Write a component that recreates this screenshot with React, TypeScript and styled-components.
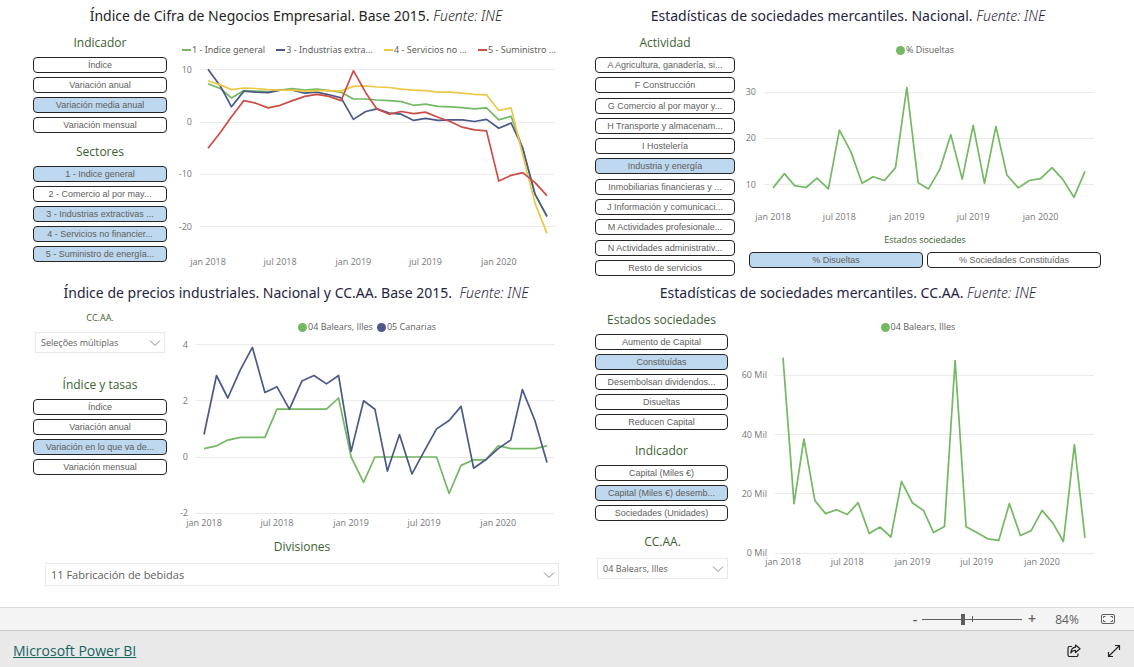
import React, { useId, useState } from "react";
import styled, { createGlobalStyle } from "styled-components";

const GlobalStyle = createGlobalStyle`
  *, *::before, *::after { box-sizing: border-box; }
  body {
    margin: 0;
    background: #fff;
    color: #605e5c;
    font-family: "Open Sans", "Noto Sans", sans-serif;
  }
  button, select, input { font: inherit; color: inherit; margin: 0; }
`;

const GREEN = "#74b862";
const BLUE = "#4a588a";
const YELLOW = "#ecc846";
const RED = "#cd4c46";

/* ---------- layout ---------- */

const Page = styled.div`
  min-height: 100vh;
  display: flex;
  flex-direction: column;
`;

const Report = styled.main`
  flex: 1;
  display: grid;
  grid-template-columns: 1fr 1fr;
  grid-template-rows: minmax(277px, auto) auto;
  align-content: start;
`;

const Panel = styled.section<{ $side: "left" | "right" }>`
  min-width: 0;
  padding: ${(p) => (p.$side === "left" ? "0 8px 0 33px" : "0 33px 0 28px")};
`;

const Title = styled.h2<{ $tone?: string }>`
  margin: 0;
  font-family: "Noto Sans", "Open Sans", sans-serif;
  font-size: 14px;
  line-height: 32px;
  font-weight: 400;
  text-align: center;
  white-space: nowrap;
  color: ${(p) => p.$tone || "#1f2440"};
  em { font-weight: 300; }
`;

const Columns = styled.div<{ $gap: number }>`
  display: flex;
  align-items: flex-start;
  gap: ${(p) => p.$gap}px;
`;

const Sidebar = styled.div<{ $width: number; $gap: number }>`
  flex: 0 0 ${(p) => p.$width}px;
  display: flex;
  flex-direction: column;
  gap: ${(p) => p.$gap}px;
`;

const ChartArea = styled.div`
  flex: 1;
  min-width: 0;
`;

/* ---------- slicers ---------- */

const Group = styled.div<{ $inset?: string }>`
  min-width: 0;
  padding: ${(p) => p.$inset || 0};
`;

const Heading = styled.h3<{ $small?: boolean }>`
  margin: 0 0 3px;
  font-size: ${(p) => (p.$small ? 9 : 12)}px;
  line-height: ${(p) => (p.$small ? 19 : 22)}px;
  font-weight: 400;
  text-align: center;
  color: #3b6132;
`;

const List = styled.div<{ $tall?: boolean }>`
  display: flex;
  flex-direction: column;
  justify-content: space-between;
  gap: 4px;
  min-height: ${(p) => (p.$tall ? "219px" : "0")};
`;

const Pair = styled.div`
  display: grid;
  grid-template-columns: 1fr 1fr;
  gap: 4px;
`;

const Tile = styled.button<{ $on: boolean }>`
  height: 16px;
  padding: 0 4px;
  border: 1px solid #252423;
  border-radius: 4px;
  background: ${(p) => (p.$on ? "#bdd7ee" : "#fff")};
  color: #605e5c;
  font-family: "Liberation Sans", Arial, sans-serif;
  font-size: 9px;
  line-height: 14px;
  text-align: center;
  white-space: nowrap;
  overflow: hidden;
  cursor: pointer;
`;

function Tiles({ items, initial, as: Wrap = List, tall }: { items: string[]; initial: string[]; as?: any; tall?: boolean }) {
  const [on, setOn] = useState(initial);
  const toggle = (t: string) => setOn(on.includes(t) ? on.filter((x) => x !== t) : [...on, t]);
  return (
    <Wrap $tall={tall}>
      {items.map((t) => (
        <Tile key={t} type="button" $on={on.includes(t)} aria-pressed={on.includes(t)} onClick={() => toggle(t)}>
          {t}
        </Tile>
      ))}
    </Wrap>
  );
}

function Slicer({ title, small, ...rest }: { title: string; small?: boolean; items: string[]; initial: string[]; as?: any; tall?: boolean }) {
  return (
    <Group role="group" aria-label={title}>
      <Heading $small={small}>{title}</Heading>
      <Tiles {...rest} />
    </Group>
  );
}

const SelectLabel = styled.label<{ $small?: boolean }>`
  display: block;
  margin-bottom: 5px;
  font-size: ${(p) => (p.$small ? 9 : 12)}px;
  line-height: ${(p) => (p.$small ? 18 : 22)}px;
  text-align: center;
  color: #3b6132;
`;

const SelectBox = styled.div`
  position: relative;
  svg {
    position: absolute;
    right: 4px;
    top: 50%;
    margin-top: -4px;
    pointer-events: none;
  }
`;

const NativeSelect = styled.select<{ $large?: boolean }>`
  display: block;
  width: 100%;
  height: ${(p) => (p.$large ? 23 : 21)}px;
  padding: 0 20px 0 5px;
  border: 1px solid #e9e9e9;
  border-radius: 0;
  background: #fff;
  appearance: none;
  font-size: ${(p) => (p.$large ? 11 : 9)}px;
  color: #605e5c;
`;

function Dropdown({ label, value, small, large, inset }: { label: string; value: string; small?: boolean; large?: boolean; inset: string }) {
  const id = useId();
  return (
    <Group $inset={inset}>
      <SelectLabel htmlFor={id} $small={small}>{label}</SelectLabel>
      <SelectBox>
        <NativeSelect id={id} $large={large}>
          <option>{value}</option>
        </NativeSelect>
        <svg width="12" height="8" viewBox="0 0 12 8" fill="none" stroke="#8a8886" aria-hidden="true">
          <path d="M1 1.5 6 6.5 11 1.5" />
        </svg>
      </SelectBox>
    </Group>
  );
}

/* ---------- charts ---------- */

const Legend = styled.ul<{ $spread?: boolean }>`
  display: flex;
  justify-content: ${(p) => (p.$spread ? "space-between" : "center")};
  gap: 4px;
  margin: 0;
  padding: ${(p) => (p.$spread ? "9px 3px 0 7px" : "9px 0 0")};
  list-style: none;
  font-family: ${(p) => (p.$spread ? '"Noto Sans", "Open Sans", sans-serif' : "inherit")};
  font-size: 9px;
  line-height: 18px;
  white-space: nowrap;
`;

const LegendItem = styled.li`
  display: flex;
  align-items: center;
  gap: 1px;
`;

const Dot = styled.span<{ $color: string }>`
  width: 9px;
  height: 9px;
  border-radius: 50%;
  background: ${(p) => p.$color};
`;

const Dash = styled.span<{ $color: string }>`
  width: 9px;
  height: 2px;
  background: ${(p) => p.$color};
`;

const Plot = styled.svg`
  display: block;
  width: 100%;
  height: auto;
  overflow: visible;
  text { font-size: 9px; fill: #777; }
`;

interface Series { name: string; color: string; values: number[] }
interface ChartProps {
  label: string;
  series: Series[];
  mark: "dot" | "dash";
  width: number;
  height: number;
  x: [number, number];
  grid: [number, number];
  zero: number;
  unit: number;
  ticks: number[];
  suffix?: string;
  axisY: number;
}

const monthOffset = (i: number) => (Date.UTC(2018, i, 1) - Date.UTC(2018, 0, 1)) / 86400000;
const LAST = monthOffset(28);
const MONTHS: [number, string][] = [[0, "jan 2018"], [6, "jul 2018"], [12, "jan 2019"], [18, "jul 2019"], [24, "jan 2020"]];

function LineChart({ label, series, mark, width, height, x, grid, zero, unit, ticks, suffix = "", axisY }: ChartProps) {
  const px = (i: number) => x[0] + (monthOffset(i) / LAST) * (x[1] - x[0]);
  const py = (v: number) => zero - v * unit;
  return (
    <div>
      <Legend $spread={mark === "dash"}>
        {series.map((s) => (
          <LegendItem key={s.name}>
            {mark === "dot" ? <Dot $color={s.color} /> : <Dash $color={s.color} />}
            {s.name}
          </LegendItem>
        ))}
      </Legend>
      <Plot viewBox={`0 0 ${width} ${height}`} role="img" aria-label={label}>
        {ticks.map((t) => (
          <g key={t}>
            <line x1={grid[0]} x2={grid[1]} y1={Math.floor(py(t)) + 0.5} y2={Math.floor(py(t)) + 0.5} stroke="#ebebeb" />
            <text x={grid[0] - 8} y={py(t) + 3} textAnchor="end">{t}{suffix}</text>
          </g>
        ))}
        {MONTHS.map(([i, m]) => (
          <text key={m} x={px(i)} y={axisY + 3} textAnchor="middle">{m}</text>
        ))}
        {series.map((s) => (
          <polyline
            key={s.name}
            points={s.values.map((v, i) => `${px(i).toFixed(1)},${py(v).toFixed(1)}`).join(" ")}
            fill="none"
            stroke={s.color}
            strokeWidth="1.7"
            strokeLinejoin="round"
          />
        ))}
      </Plot>
    </div>
  );
}

const turnover: Series[] = [
  { name: "1 - Indice general", color: GREEN, values: [7.3, 6.4, 4.6, 6, 5.9, 5.8, 6.1, 6.4, 6.1, 6.3, 6, 5.7, 4.4, 4.4, 4.2, 4.1, 3.9, 3.2, 3.4, 3, 2.9, 2.75, 2.5, 2.7, 0.4, 1.1, -5, -13.8, -18] },
  { name: "3 - Industrias extra...", color: BLUE, values: [10.1, 6.9, 2.9, 5.9, 5.7, 5.6, 6.1, 6.1, 5.5, 5.7, 5.2, 4.6, 0.5, 2, 2.5, 1.7, 1.5, 0.3, 0.7, 0.3, 0.4, 0.4, 0.1, 0.5, -1.2, -0.2, -5, -13.8, -18.1] },
  { name: "4 - Servicios no ...", color: YELLOW, values: [7.9, 7.1, 6.2, 6.5, 6.4, 6.2, 6.1, 6.1, 5.9, 6, 6, 5.9, 6.8, 6.9, 6.7, 6.6, 6.3, 6.1, 6, 5.7, 5.7, 5.5, 5.3, 5.2, 2.2, 2.7, -6.3, -15.5, -21.3] },
  { name: "5 - Suministro ...", color: RED, values: [-5, -2, 1, 4.1, 3.6, 2.7, 3.2, 4.1, 4.9, 5.3, 4.9, 4.1, 9.8, 5.6, 2.5, 1.5, 2, 1.6, 1.9, 0.9, 0.1, -1, -1.5, -1.7, -11.3, -10.2, -9.7, -11.6, -14.1] },
];

const dissolved: Series[] = [
  { name: "% Disueltas", color: GREEN, values: [9.3, 12.4, 9.8, 9.4, 11.4, 9.1, 21.8, 17.2, 10.3, 11.7, 10.9, 13.7, 31, 10.4, 9.1, 13.3, 20.8, 11.2, 22.8, 10.3, 22.6, 12.1, 9.3, 10.9, 11.3, 13.7, 11.2, 7.3, 12.9] },
];

const prices: Series[] = [
  { name: "04 Balears, Illes", color: GREEN, values: [0.3, 0.4, 0.6, 0.7, 0.7, 0.7, 1.7, 1.7, 1.7, 1.7, 1.7, 2.1, 0, -0.9, 0, 0, 0, 0, 0, 0, -1.3, -0.3, -0.1, -0.1, 0.4, 0.3, 0.3, 0.3, 0.4] },
  { name: "05 Canarias", color: BLUE, values: [0.8, 2.9, 2.1, 3.1, 3.9, 2.3, 2.5, 1.7, 2.7, 2.9, 2.6, 2.9, 0.2, 2, 1.7, -0.5, 0.8, -0.6, 0.2, 1, 1.3, 1.8, -0.4, -0.1, 0.3, 0.6, 2.4, 1.3, -0.2] },
];

const capital: Series[] = [
  { name: "04 Balears, Illes", color: GREEN, values: [66, 16.7, 38.5, 17.7, 13.3, 14.6, 13, 17, 6.6, 8.8, 5.4, 24.2, 16.9, 14.4, 6.9, 9, 65, 8.9, 6.9, 4.8, 4.3, 16.7, 5.9, 7.5, 14.4, 10, 3.9, 36.6, 5.1] },
];

/* ---------- bottom bars ---------- */

const ZoomBar = styled.div`
  display: flex;
  align-items: center;
  justify-content: flex-end;
  height: 24px;
  padding-right: 16px;
  border-top: 1px solid #d8d8d8;
  border-bottom: 1px solid #c8c8c8;
  background: #f4f4f4;
  font-size: 12px;
  color: #605e5c;
`;

const PlainButton = styled.button<{ $width?: number }>`
  display: grid;
  place-items: center;
  width: ${(p) => p.$width || 20}px;
  height: 20px;
  padding: 0;
  border: 0;
  background: none;
  font-size: 14px;
  font-weight: 600;
  line-height: 20px;
  color: #605e5c;
  cursor: pointer;
`;

const Slider = styled.input`
  appearance: none;
  width: 100px;
  height: 14px;
  background:
    linear-gradient(#605e5c, #605e5c) 50px 50% / 1px 6px no-repeat,
    linear-gradient(#605e5c, #605e5c) 0 50% / 100% 1px no-repeat;
  &::-webkit-slider-thumb {
    appearance: none;
    width: 4px;
    height: 11px;
    border: 0;
    border-radius: 0;
    background: #605e5c;
  }
`;

const Percent = styled.output`
  width: 56px;
  padding-right: 6px;
  text-align: center;
`;

const Footer = styled.footer`
  display: flex;
  align-items: center;
  height: 36px;
  padding: 4px 10px 0 13px;
  background: #e9e9e9;
  gap: 20px;
`;

const Brand = styled.a`
  margin-right: auto;
  font-size: 14px;
  line-height: 20px;
  color: #17645f;
`;

function ZoomControls() {
  const [zoom, setZoom] = useState(84);
  return (
    <ZoomBar>
      <PlainButton type="button" $width={14} aria-label="Reducir" onClick={() => setZoom(zoom - 1)}>-</PlainButton>
      <Slider type="range" aria-label="Zoom" min={10} max={190} value={zoom} onChange={(e) => setZoom(+e.target.value)} />
      <PlainButton type="button" aria-label="Ampliar" onClick={() => setZoom(zoom + 1)}>+</PlainButton>
      <Percent>{zoom}%</Percent>
      <PlainButton type="button" aria-label="Ajustar a la página">
        <svg width="14" height="10" viewBox="0 0 14 10" fill="none" stroke="#605e5c">
          <rect x="0.5" y="0.5" width="13" height="9" rx="1.5" />
          <path d="M4.5 2.5h-2v1.5M2.5 6v1.5h2M9.5 2.5h2v1.5M11.5 6v1.5h-2" />
        </svg>
      </PlainButton>
    </ZoomBar>
  );
}

export default function App() {
  return (
    <Page>
      <GlobalStyle />
      <Report>
        <Panel $side="left">
          <Title $tone="#252423">Índice de Cifra de Negocios Empresarial. Base 2015. <em>Fuente: INE</em></Title>
          <Columns $gap={8}>
            <Sidebar $width={134} $gap={8}>
              <Slicer title="Indicador" items={["Índice", "Variación anual", "Variación media anual", "Variación mensual"]} initial={["Variación media anual"]} />
              <Slicer
                title="Sectores"
                items={["1 - Indice general", "2 - Comercio al por may...", "3 - Industrias extractivas ...", "4 - Servicios no financier...", "5 - Suministro de energía..."]}
                initial={["1 - Indice general", "3 - Industrias extractivas ...", "4 - Servicios no financier...", "5 - Suministro de energía..."]}
              />
            </Sidebar>
            <ChartArea>
              <LineChart label="Índice de Cifra de Negocios" series={turnover} mark="dash" width={384} height={218} x={[33, 372]} grid={[25, 380]} zero={63} unit={5.23} ticks={[10, 0, -10, -20]} axisY={203} />
            </ChartArea>
          </Columns>
        </Panel>

        <Panel $side="right">
          <Title>Estadísticas de sociedades mercantiles. Nacional. <em>Fuente: INE</em></Title>
          <Columns $gap={14}>
            <Sidebar $width={140} $gap={8}>
              <Slicer
                title="Actividad"
                tall
                items={["A Agricultura, ganadería, si...", "F Construcción", "G Comercio al por mayor y...", "H Transporte y almacenam...", "I Hostelería", "Industria y energía", "Inmobiliarias financieras y ...", "J Información y comunicaci...", "M Actividades profesionale...", "N Actividades administrativ...", "Resto de servicios"]}
                initial={["Industria y energía"]}
              />
            </Sidebar>
            <ChartArea>
              <LineChart label="% Disueltas" series={dissolved} mark="dot" width={352} height={171} x={[24, 336]} grid={[15, 345]} zero={172} unit={4.63} ticks={[30, 20, 10]} axisY={158} />
              <Slicer small title="Estados sociedades" as={Pair} items={["% Disueltas", "% Sociedades Constituídas"]} initial={["% Disueltas"]} />
            </ChartArea>
          </Columns>
        </Panel>

        <Panel $side="left">
          <Title>Índice de precios industriales. Nacional y CC.AA. Base 2015.&nbsp; <em>Fuente: INE</em></Title>
          <Columns $gap={8}>
            <Sidebar $width={134} $gap={21}>
              <Dropdown small label="CC.AA." value="Seleções múltiplas" inset="0 2px" />
              <Slicer title="Índice y tasas" items={["Índice", "Variación anual", "Variación en lo que va de...", "Variación mensual"]} initial={["Variación en lo que va de..."]} />
            </Sidebar>
            <ChartArea>
              <LineChart label="Índice de precios industriales" series={prices} mark="dot" width={384} height={200} x={[29, 372]} grid={[21, 380]} zero={121} unit={28.1} ticks={[4, 2, 0, -2]} axisY={187} />
            </ChartArea>
          </Columns>
          <Dropdown large label="Divisiones" value="11 Fabricación de bebidas" inset="0 0 0 12px" />
        </Panel>

        <Panel $side="right">
          <Title>Estadísticas de sociedades mercantiles. CC.AA. <em>Fuente: INE</em></Title>
          <Columns $gap={7}>
            <Sidebar $width={133} $gap={10}>
              <Slicer title="Estados sociedades" items={["Aumento de Capital", "Constituídas", "Desembolsan dividendos...", "Disueltas", "Reducen Capital"]} initial={["Constituídas"]} />
              <Slicer title="Indicador" items={["Capital (Miles €)", "Capital (Miles €) desemb...", "Sociedades (Unidades)"]} initial={["Capital (Miles €) desemb..."]} />
              <Dropdown label="CC.AA." value="04 Balears, Illes" inset="0 0 0 2px" />
            </Sidebar>
            <ChartArea>
              <LineChart label="Capital desembolsado" series={capital} mark="dot" width={366} height={236} x={[48, 350]} grid={[40, 359]} zero={217} unit={2.96} ticks={[60, 40, 20, 0]} suffix=" Mil" axisY={226} />
            </ChartArea>
          </Columns>
        </Panel>
      </Report>

      <ZoomControls />
      <Footer>
        <Brand href="#">Microsoft Power BI</Brand>
        <PlainButton type="button" aria-label="Compartir">
          <svg width="14" height="14" viewBox="0 0 14 14" fill="none" stroke="#252423" strokeWidth="1.2" strokeLinejoin="round">
            <path d="M5 2.5H2.5A1.5 1.5 0 0 0 1 4v7a1.5 1.5 0 0 0 1.5 1.5h7A1.5 1.5 0 0 0 11 11V9.500" />
            <path d="M8.5 1 13 4.800 8.500 8.500V6.400C6 6.300 4.800 7.200 3.800 8.900 4.100 5.700 5.700 3.500 8.500 3.200Z" />
          </svg>
        </PlainButton>
        <PlainButton type="button" aria-label="Pantalla completa">
          <svg width="14" height="14" viewBox="0 0 14 14" fill="none" stroke="#252423" strokeWidth="1.2">
            <path d="M1.500 12.500 12.500 1.500M8 1.500h4.500V6M1.500 8v4.500H6" />
          </svg>
        </PlainButton>
      </Footer>
    </Page>
  );
}
